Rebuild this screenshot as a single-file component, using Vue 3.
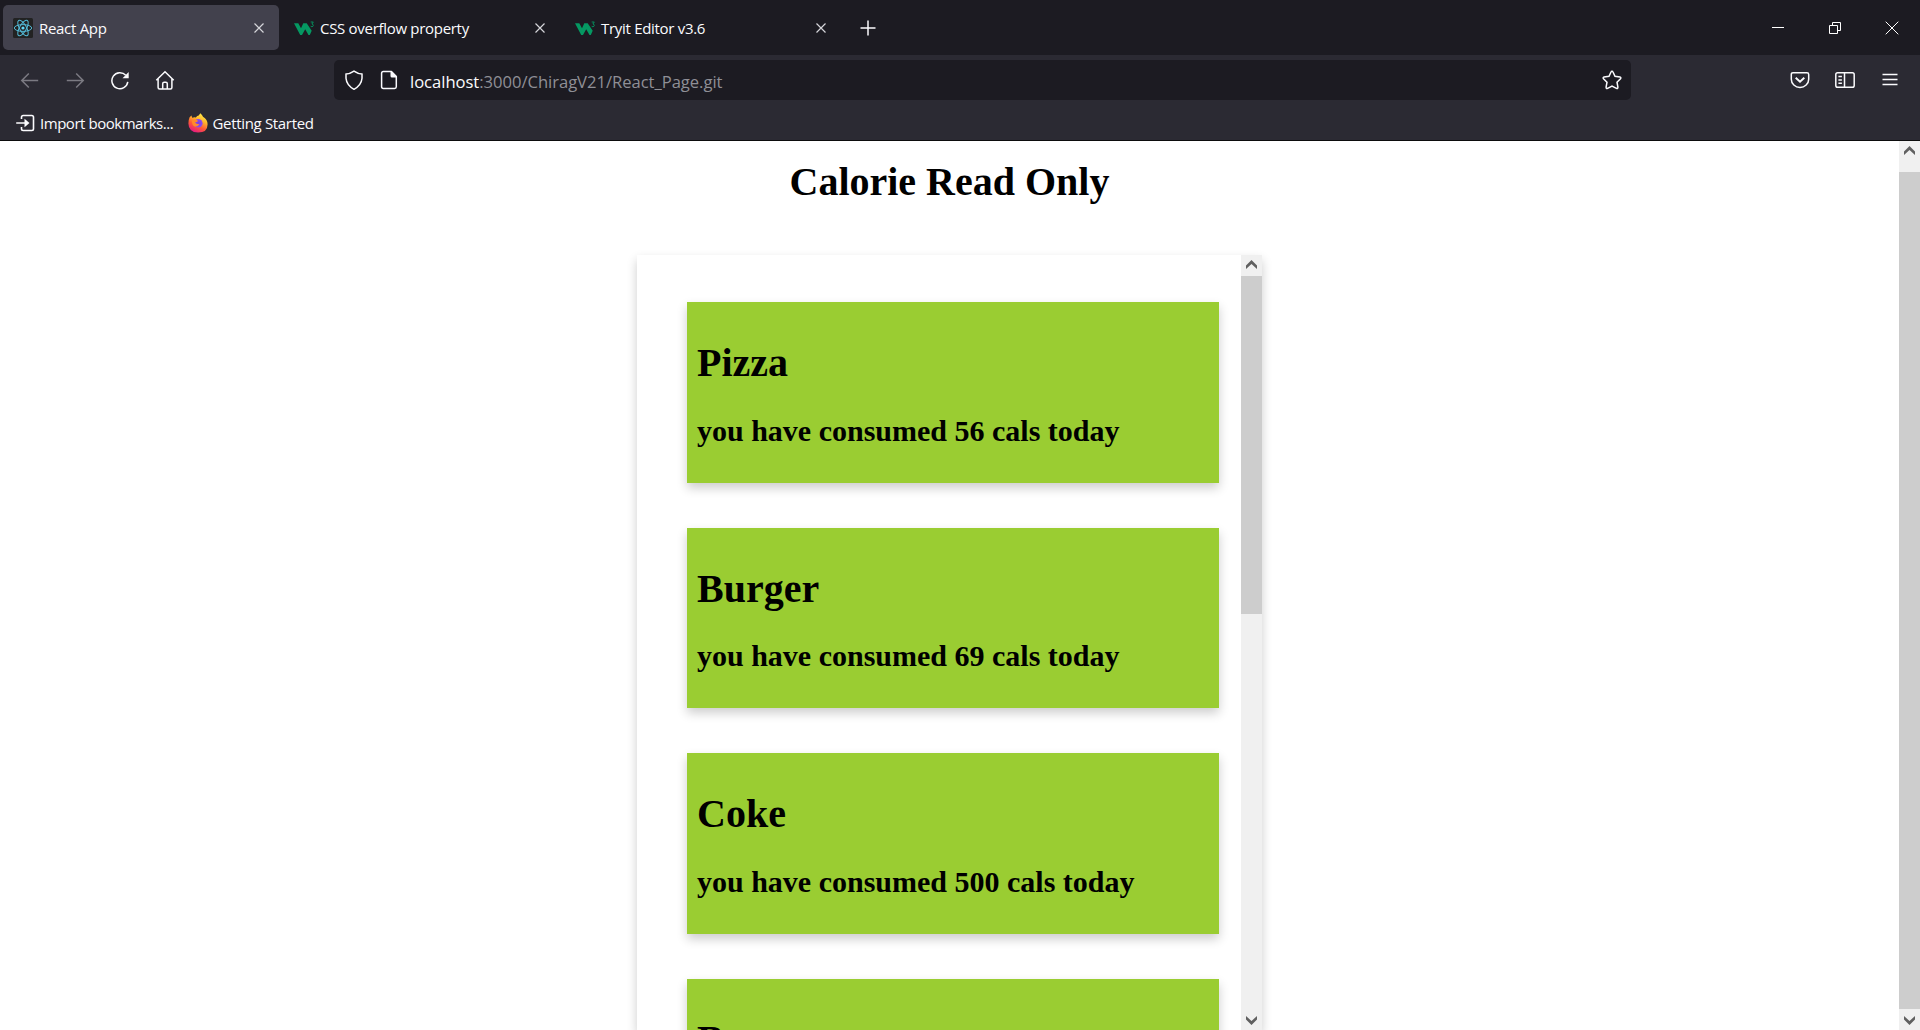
<script setup>
const tabs = [
  { title: 'React App', icon: 'react', active: true },
  { title: 'CSS overflow property', icon: 'w3' },
  { title: 'Tryit Editor v3.6', icon: 'w3' },
]
const foods = [
  { name: 'Pizza', cal: 56 },
  { name: 'Burger', cal: 69 },
  { name: 'Coke', cal: 500 },
  { name: 'Banana', cal: 180 },
]
</script>

<template>
  <div class="window">
    <header class="chrome">
      <div class="tabstrip">
        <div v-for="t in tabs" :key="t.title" class="tab" :class="{ active: t.active }">
          <svg v-if="t.icon === 'react'" class="favicon" viewBox="0 0 20 20">
            <rect width="20" height="20" rx="1.5" fill="#222222" />
            <g fill="none" stroke="#53b9d6" stroke-width="1">
              <ellipse cx="10" cy="10" rx="8.7" ry="3.4" />
              <ellipse cx="10" cy="10" rx="8.7" ry="3.4" transform="rotate(60 10 10)" />
              <ellipse cx="10" cy="10" rx="8.7" ry="3.4" transform="rotate(120 10 10)" />
            </g>
            <circle cx="10" cy="10" r="1.6" fill="#61dafb" />
          </svg>
          <svg v-else class="favicon" viewBox="0 0 20 20">
            <path d="M0 5.200h4.300l2.700 5 2.300-5h3.400l5 7.600-1.900 4.300h-1.300l-3.300-5.900-3.200 5.900H6.200z" fill="#059862" />
            <path d="M16.700 4h2.600l-1.400 2c1.900 0 1.900 2.700 0 2.700-.7 0-1.200-.3-1.300-.8" fill="none" stroke="#059862" stroke-width=".9" />
          </svg>
          <span class="tab-title">{{ t.title }}</span>
          <svg class="close" width="12" height="12" viewBox="0 0 12 12"><path d="M1.500 1.500l9 9M10.500 1.500l-9 9" /></svg>
        </div>
        <svg class="plus" width="16" height="16" viewBox="0 0 16 16"><path d="M8 .5v15M.5 8h15" /></svg>
        <div class="controls">
          <svg width="14" height="14" viewBox="0 0 14 14"><path d="M1 6.500h12" /></svg>
          <svg width="14" height="14" viewBox="0 0 14 14"><path d="M1.500 4.500h8v8h-8zM4.500 4.500v-3h8v8h-3" /></svg>
          <svg width="14" height="14" viewBox="0 0 14 14"><path d="M.7.7l12.600 12.600M13.300.7L.7 13.300" /></svg>
        </div>
      </div>

      <div class="navbar">
        <div class="nav-buttons">
          <svg class="dim" viewBox="0 0 20 20"><path d="M18.200 10.500H1.800M8.800 3.500L1.800 10.500l7 7" /></svg>
          <svg class="dim" viewBox="0 0 20 20"><path d="M1.800 10.500h16.400M11.200 3.500l7 7-7 7" /></svg>
          <svg viewBox="0 0 20 20"><path d="M17.800 11.900A8 8 0 1 1 15.800 5.300" /><path d="M18.700 2.100v6.200h-6.200z" fill="#fbfbfe" stroke="none" /></svg>
          <svg class="home" viewBox="0 0 20 20"><path d="M1.300 10.200L10 1.700l8.700 8.500M3.100 8.700v8.700q0 1.500 1.500 1.500h10.800q1.500 0 1.500-1.500V8.700M7.700 18.700v-5q0-1.500 1.500-1.500h1.600q1.500 0 1.500 1.500v5" /></svg>
        </div>
        <div class="urlbar">
          <svg viewBox="0 0 20 20"><path d="M10 1.100q4 2.700 8 3v4.200q-.6 7-8 11-7.400-4-8-11V4.100q4-.3 8-3z" /></svg>
          <svg class="page" viewBox="0 0 20 20"><path d="M4.300 1.500h8L17.300 6.500v10.300q0 1.700-1.700 1.700H4.300q-1.700 0-1.700-1.700V3.200q0-1.700 1.700-1.700z" /><path d="M11.500 1.200h1.300l4.800 4.800v1.400h-4.600q-1.500 0-1.500-1.500z" fill="#fbfbfe" stroke="none" /></svg>
          <span class="url"><b>localhost</b>:3000/ChiragV21/React_Page.git</span>
          <svg class="star" viewBox="0 0 20 20"><path d="M10 1.200q.7 0 1 .8l2 4.300 4.900.7q1.600.4.600 1.700l-3.500 3.500.9 4.900q.1 1.800-1.500 1.200L10 16l-4.400 2.300q-1.600.6-1.500-1.200l.9-4.900L1.500 8.700q-1-1.300.6-1.700L7 6.300 9 2q.3-.8 1-.8z" /></svg>
        </div>
        <div class="nav-tools">
          <svg viewBox="0 0 20 20"><path d="M3 2.700h14q1.700 0 1.700 1.700v4.800a8.700 8.200 0 0 1-17.400 0V4.400q0-1.700 1.700-1.700z" /><path d="M5.700 7.700L10 11.800l4.300-4.100" stroke-width="1.900" /></svg>
          <svg viewBox="0 0 20 20"><path d="M2.600 2.800h14.800q1.800 0 1.800 1.800v10.800q0 1.800-1.800 1.800H2.600q-1.800 0-1.800-1.800V4.600q0-1.800 1.800-1.800zM9.500 3v14M3.400 6.500h3.500M3.400 9.900h3.500M3.400 13.300h3.500" /></svg>
          <svg viewBox="0 0 20 20"><path d="M2.500 4.500h15M2.500 9.500h15M2.500 14.500h15" /></svg>
        </div>
      </div>

      <div class="bookmarks">
        <svg viewBox="0 0 20 20"><path d="M6.500 6V4.200q0-1.700 1.700-1.700h8.600q1.700 0 1.700 1.700v11.600q0 1.700-1.700 1.700H8.200q-1.700 0-1.700-1.700V14M1.200 10h9" stroke-width="1.600" /><path d="M9.500 5.800l5 4.200-5 4.200z" fill="#fbfbfe" stroke="none" /></svg>
        <span class="bm-import">Import bookmarks...</span>
        <svg class="fox" viewBox="0 0 20 20">
          <defs>
            <linearGradient id="flame" x1=".8" y1="0" x2=".3" y2="1">
              <stop offset="0" stop-color="#fff44f" /><stop offset=".35" stop-color="#ffb72b" />
              <stop offset=".65" stop-color="#ff5a36" /><stop offset="1" stop-color="#e31587" />
            </linearGradient>
            <radialGradient id="globe"><stop offset="0" stop-color="#7a3fe0" /><stop offset="1" stop-color="#8d4bf0" /></radialGradient>
          </defs>
          <path d="M1.600 4.200L3.400 2.500l.8 2.300q1.700-.8 3.600-.4Q9.200 2.700 10.700 2.600L12.300.2q2 1.600 2.700 3.500 4.600 2.700 4.600 7.500 0 8.300-9.500 8.400Q.5 19 .4 10.400q0-3.600 1.200-6.200z" fill="url(#flame)" />
          <circle cx="10.300" cy="10.200" r="4.300" fill="url(#globe)" />
          <path d="M4 7.200q3.200-1.800 6.200.7-1.800 1.300-3.200 1.200 1 2.800 4.600 1.700-1.500 3.300-5 2.600Q3.500 12 4 7.200z" fill="#ff8a2b" />
        </svg>
        <span class="bm-start">Getting Started</span>
      </div>
    </header>

    <div class="viewport">
      <main class="page-body">
        <h1 class="heading">Calorie Read Only</h1>
        <div class="panel">
          <div class="list">
            <article v-for="f in foods" :key="f.name" class="card">
              <h1>{{ f.name }}</h1>
              <h2>you have consumed {{ f.cal }} cals today</h2>
            </article>
          </div>
          <div class="scroll">
            <div class="arrow"><svg width="11" height="9" viewBox="0 0 11 9"><path d="M0 5.600L5.500 0 11 5.600V9L5.500 3.900 0 9z" /></svg></div>
            <div class="thumb inner-thumb"></div>
            <div class="arrow down"><svg width="11" height="9" viewBox="0 0 11 9"><path d="M0 5.600L5.500 0 11 5.600V9L5.500 3.900 0 9z" /></svg></div>
          </div>
        </div>
      </main>
      <div class="scroll">
        <div class="arrow outer-up"><svg width="11" height="9" viewBox="0 0 11 9"><path d="M0 5.600L5.500 0 11 5.600V9L5.500 3.900 0 9z" /></svg></div>
        <div class="thumb outer-thumb"></div>
        <div class="arrow down"><svg width="11" height="9" viewBox="0 0 11 9"><path d="M0 5.600L5.500 0 11 5.600V9L5.500 3.900 0 9z" /></svg></div>
      </div>
    </div>
  </div>
</template>

<style>
body { margin: 0; overflow: hidden; }
</style>

<style scoped>
* { box-sizing: border-box; }
svg { display: block; flex: none; }
.window { width: 1920px; height: 1030px; display: flex; flex-direction: column; overflow: hidden; background: #fff; }
.chrome {
  flex: none; height: 141px; background: #2b2a33; border-bottom: 1px solid #0c0c0d;
  color: #fbfbfe; font: 15px/20px "Open Sans", "Noto Sans", sans-serif; white-space: nowrap;
}
.chrome svg { fill: none; stroke: #fbfbfe; stroke-width: 1.5; }
.chrome .favicon, .chrome .fox { stroke: none; }
.tabstrip { height: 55px; background: #1c1b22; display: flex; align-items: center; padding-left: 3px; }
.tab { width: 276px; height: 45px; margin-right: 5px; border-radius: 5px; padding: 0 14px 0 10px; display: flex; align-items: center; }
.tab.active { background: #42414d; }
.favicon { width: 20px; height: 20px; margin-right: 6px; }
.tab-title { flex: 1; font-size: 15px; letter-spacing: -0.300px; }
.chrome .close { stroke-width: 1.200; stroke: #d5d5da; }
.plus { margin-left: 14px; }
.controls { margin-left: auto; display: flex; gap: 43px; padding-right: 21px; }
.chrome .controls svg { stroke-width: 1; stroke: #fff; }
.navbar { height: 50px; display: flex; align-items: center; }
.nav-buttons { display: flex; gap: 25px; padding-left: 20px; width: 334px; }
.home { margin-left: -0.500px; }
.navbar svg, .bookmarks svg { width: 20px; height: 20px; }
.chrome .dim { stroke: #7b7a82; }
.urlbar { width: 1297px; height: 40px; border-radius: 5px; background: #1c1b22; display: flex; align-items: center; padding: 0 9px 0 10px; }
.page { margin-left: 15px; }
.url { flex: 1; margin-left: 11px; font-size: 16.600px; color: #8f8f96; letter-spacing: -0.030px; padding-top: 4px; }
.url b { font-weight: 400; color: #fbfbfe; }
.nav-tools { margin-left: auto; display: flex; gap: 25px; padding-right: 20px; }
.bookmarks { height: 35px; display: flex; align-items: center; padding-left: 15px; font-size: 15px; }
.bm-import { margin-left: 5px; width: 148px; letter-spacing: -0.460px; }
.bm-start { margin-left: 4.500px; letter-spacing: -0.330px; }

.viewport { flex: 1; min-height: 0; display: flex; font-family: "Liberation Serif", serif; color: #000; }
.page-body { width: 1899px; display: flex; flex-direction: column; align-items: center; overflow: hidden; }
h1, h2 { margin: 0; font-weight: 700; }
h1 { font-size: 40px; line-height: 46px; }
h2 { font-size: 30px; line-height: 34px; }
.heading { margin-top: 18px; margin-bottom: 50px; }
.panel { width: 625px; height: 775px; flex: none; display: flex; box-shadow: 0 5px 10px rgba(0, 0, 0, .2); }
.list { width: 604px; height: 775px; overflow: hidden; padding: 47px 22px 0 50px; display: flex; flex-direction: column; gap: 45px; }
.card { flex: none; height: 180.500px; padding: 38px 10px 0; background: #9acd32; box-shadow: 0 5px 10px rgba(0, 0, 0, .2); }
.card h2 { margin-top: 27.700px; }
.scroll { width: 21px; background: #f0f0f0; display: flex; flex-direction: column; }
.arrow { height: 21px; display: flex; justify-content: center; padding-top: 5px; }
.arrow svg { fill: #606060; }
.outer-up { height: 31px; }
.arrow.down { margin-top: auto; padding-top: 7px; }
.down svg { transform: rotate(180deg); }
.thumb { background: #cdcdcd; }
.inner-thumb { height: 338px; }
.outer-thumb { height: 837px; }
</style>
